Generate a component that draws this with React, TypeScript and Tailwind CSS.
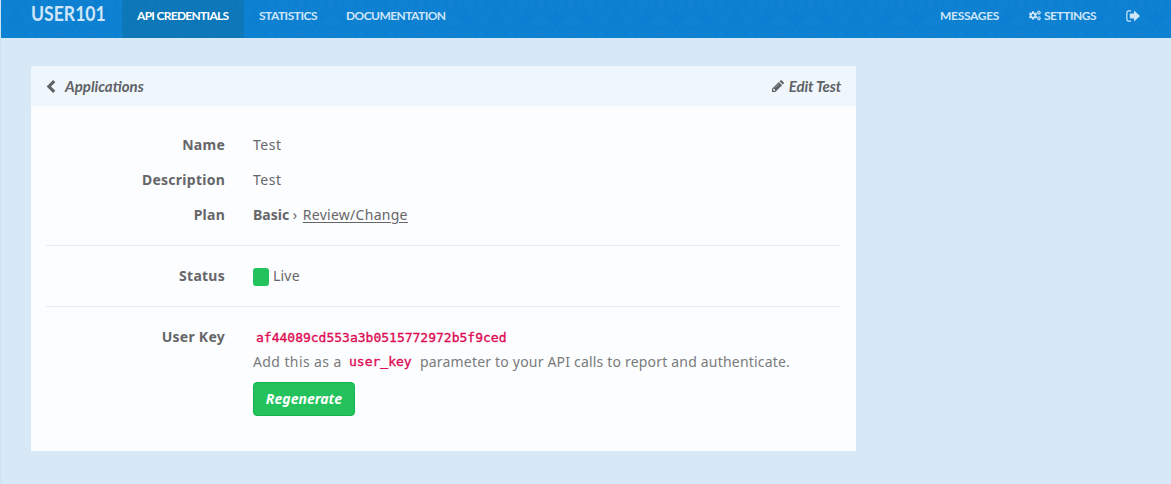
import type { ReactNode } from "react";
import { FaCogs } from "react-icons/fa";

function RingPattern() {
  const radii = [3.5, 8, 11, 14];
  const centres = [[0, 3], [30, 3], [0, 33], [30, 33]];
  return (
    <svg className="absolute inset-0 h-full w-full" aria-hidden="true">
      <defs>
        <pattern id="rings" width="30" height="30" patternUnits="userSpaceOnUse">
          {centres.map(([x, y]) =>
            radii.map((r) => (
              <circle
                key={`${x}-${y}-${r}`}
                cx={x}
                cy={y}
                r={r}
                fill={r === 3.5 ? "#fff" : "none"}
                stroke="#fff"
                strokeWidth="1.4"
                opacity="0.022"
              />
            )),
          )}
        </pattern>
      </defs>
      <rect width="100%" height="100%" fill="url(#rings)" />
    </svg>
  );
}

function ChevronIcon() {
  return (
    <svg viewBox="0 0 9 12" className="h-[13px] w-[10px]" fill="none" stroke="currentColor" strokeWidth="2.8">
      <path d="M7.5 1 2.5 6l5 5" />
    </svg>
  );
}

function PencilIcon() {
  return (
    <svg viewBox="0 0 12 12" className="h-[12px] w-[12px]" fill="currentColor">
      <path d="M0 12V8.7L6.8 1.9l3.3 3.3L3.3 12zM7.5 1.2 8.3.4a1.1 1.1 0 0 1 1.5 0l1.8 1.8a1.1 1.1 0 0 1 0 1.5l-.8.8z" />
      <path d="M1 9.2v1h.9v.9h.9l.6-.6-1.8-1.9z" fill="#eff6fc" />
      <path d="M2.9 7.7 6.9 3.7" stroke="#eff6fc" strokeWidth=".4" />
    </svg>
  );
}

function SignOutIcon() {
  return (
    <svg viewBox="0 0 14 12" className="mt-[10px] h-[12px] w-[14px]" fill="currentColor">
      <path d="M5 .3H2.8A2.5 2.5 0 0 0 .3 2.8v6.400a2.500 2.500 0 0 0 2.500 2.500H5v-1.200H2.800a1.300 1.300 0 0 1-1.300-1.300V2.800a1.300 1.300 0 0 1 1.300-1.300H5z" />
      <path d="M8 .4 14 6l-6 5.600V8.500H3.800v-5H8z" />
    </svg>
  );
}

function Row({ label, children }: { label: string; children: ReactNode }) {
  return (
    <div className="flex min-h-[35px] leading-[20px]">
      <div className="w-[179px] shrink-0 text-right font-bold tracking-[0.25px]">{label}</div>
      <div className="ml-7">{children}</div>
    </div>
  );
}

export default function App() {
  return (
    <div className="h-[484px] w-full overflow-hidden border-l border-[#c9e2f5] bg-[#d7e9f7] font-['Noto_Sans',sans-serif] text-[14px] text-[#666669]">
      <header className="relative h-[38px] bg-[#0b7fd1] font-['Lato',sans-serif] text-[12px] font-bold text-[#cfe6f8]">
        <RingPattern />
        <div className="relative flex h-full">
          <div className="w-[91px] pl-[30px] pt-[1px] text-[20px] leading-[24px]">
            <span className="inline-block origin-left scale-x-[0.88]">USER101</span>
          </div>
          <nav className="ml-[30px] flex leading-[32px]">
            <a className="w-[122px] whitespace-nowrap bg-[#0b6ea0]/50 pl-[15px] text-white">
              <span className="tracking-[-0.7px]">API CREDENTIALS</span>
            </a>
            <a className="w-[87px] whitespace-nowrap pl-[15px]">
              <span className="tracking-[-0.5px]">STATISTICS</span>
            </a>
            <a className="whitespace-nowrap pl-[15px]">
              <span className="tracking-[-0.55px]">DOCUMENTATION</span>
            </a>
          </nav>
          <nav className="ml-auto flex pr-[31px] leading-[32px]">
            <a className="w-[89px]">
              <span className="tracking-[-0.3px]">MESSAGES</span>
            </a>
            <a className="flex w-[97px] items-start gap-[3px]">
              <FaCogs className="mt-[10px] h-[11px] w-[12px]" />
              <span className="tracking-[-0.5px]">SETTINGS</span>
            </a>
            <a>
              <SignOutIcon />
            </a>
          </nav>
        </div>
      </header>

      <main className="ml-[30px] mt-[28px] h-[385px] w-[825px] overflow-hidden rounded-t-[3px] bg-[#fcfdff]">
        <div className="flex h-10 items-center justify-between bg-[#eff6fc] px-[15px] font-['Lato',sans-serif] text-[15px] font-bold italic text-[#606265]">
          <a className="flex items-center gap-[9px]">
            <ChevronIcon />
            <span>Applications</span>
          </a>
          <a className="flex items-center gap-[5px]">
            <PencilIcon />
            <span className="tracking-[-0.15px]">Edit Test</span>
          </a>
        </div>
        <div className="px-[15px]">
          <section className="h-[140px] border-b border-[#e9ebed] pt-[29px]">
            <Row label="Name"><span className="tracking-[0.5px]">Test</span></Row>
            <Row label="Description"><span className="tracking-[0.5px]">Test</span></Row>
            <Row label="Plan">
              <b>Basic</b> ›{" "}
              <a className="ml-[2px] tracking-[0.28px] underline underline-offset-2">Review/Change</a>
            </Row>
          </section>
          <section className="h-[61px] border-b border-[#e9ebed] pt-5">
            <Row label="Status">
              <div className="flex gap-1">
                <span className="mt-[2px] h-[18px] w-4 rounded-[3px] bg-[#23c25d]" />
                <span className="tracking-[0.2px]">Live</span>
              </div>
            </Row>
          </section>
          <section className="pt-5">
            <Row label="User Key">
              <div className="h-5 pl-[3px] text-[13px] text-[#dd0b52]">
                <code className="font-['DejaVu_Sans_Mono',monospace] [-webkit-text-stroke:0.35px_#dd0b52]">af44089cd553a3b0515772972b5f9ced</code>
              </div>
              <div className="mt-[5px] flex h-[20px] whitespace-nowrap text-[#797b7b]">
                <span className="w-[96px] tracking-[0.4px]">Add this as a</span>
                <code className="w-[71px] font-['DejaVu_Sans_Mono',monospace] text-[13px] text-[#dd0b52] [-webkit-text-stroke:0.35px_#dd0b52]">user_key</code>
                <span className="tracking-[0.19px]">parameter to your API calls to report and authenticate.</span>
              </div>
              <button className="mt-[10px] h-[34px] w-[102px] rounded-[4px] border border-[#12b44d] bg-[#23c25d] text-[14px] font-bold italic text-white">
                Regenerate
              </button>
            </Row>
          </section>
        </div>
      </main>
    </div>
  );
}
